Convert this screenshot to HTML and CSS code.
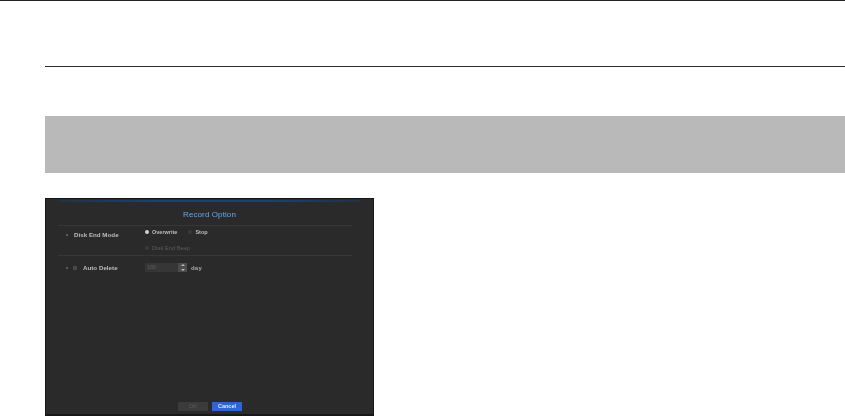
FILE: index.html
```html
<!DOCTYPE html>
<html lang="en">
<head>
<meta charset="utf-8">
<title>Record Option</title>
<link rel="stylesheet" href="styles.css">
</head>
<body>
<div class="top-rule"></div>
<main class="content">
  <div class="section-rule"></div>
  <div class="band"></div>
  <section class="dialog">
    <div class="accent"></div>
    <h1 class="title">Record Option</h1>
    <div class="form">
      <div class="row row-mode">
        <div class="label"><span class="bullet"></span>Disk End Mode</div>
        <div class="options">
          <div class="radios">
            <span class="radio radio-on"></span><span class="opt opt-over">Overwrite</span>
            <span class="radio"></span><span class="opt">Stop</span>
          </div>
          <div class="beep"><span class="check-off"></span><span class="opt-dim">Disk End Beep</span></div>
        </div>
      </div>
      <div class="row row-delete">
        <div class="label label-check"><span class="bullet"></span><span class="check"></span>Auto Delete</div>
        <div class="days">
          <div class="spin-input">180</div>
          <div class="spin-btn"><span class="up"></span><span class="down"></span></div>
          <span class="unit">day</span>
        </div>
      </div>
    </div>
    <div class="actions">
      <button class="btn btn-ok" type="button">OK</button>
      <button class="btn btn-cancel" type="button">Cancel</button>
    </div>
  </section>
</main>
</body>
</html>
```
FILE: styles.css
```css
* { box-sizing: border-box; }
html, body { margin: 0; padding: 0; height: 417px; overflow: hidden; background: #fff; }
body { font-family: "Liberation Sans", Arial, sans-serif; }
.top-rule { height: 1px; background: #222; }
.content { padding: 65px 0 0 45px; }
.section-rule { height: 1px; background: #2a2a2a; }
.band { height: 57px; margin-top: 49px; background: #b9b9b9; }
.dialog {
  width: 329px; height: 218px; margin-top: 25px;
  display: flex; flex-direction: column;
  background: #2a2a2a; border: 1px solid #161616; border-bottom-width: 2px;
}
.accent { height: 2px; margin: 1px 12px 0; background: linear-gradient(90deg, #24303f, #1d3f73 30%, #1d3f73 70%, #24303f); }
.title {
  margin: 7px 0 0; height: 12px;
  font-size: 8px; line-height: 12px; font-weight: 400; letter-spacing: .1px;
  text-align: center; color: #66a6f0; filter: blur(.4px);
}
.form { margin: 4px 21px 0 12px; flex: 1; }
.row { display: flex; border-top: 1px solid #373737; filter: blur(.4px); }
.row-mode { height: 30px; }
.row-delete { height: 30px; }
.label { width: 87px; display: flex; align-items: center; height: 17px; font-size: 6.2px; letter-spacing: .02px; font-weight: 700; color: #bcbcbc; }
.row-delete .label { height: 23px; }
.bullet { width: 2px; height: 2px; margin: 0 6px 0 8px; background: #5a5a5a; }
.label-check .bullet { margin-right: 5px; }
.check { width: 4px; height: 4px; margin-right: 6px; background: #484848; }
.options { display: flex; flex-direction: column; }
.radios { height: 12px; display: flex; align-items: center; font-size: 5.5px; font-weight: 700; color: #bdbdbd; letter-spacing: 0; }
.radio { width: 4px; height: 4px; margin-right: 3px; border-radius: 50%; background: #3c3c3c; }
.radio-on { background: #d0d0d0; }
.opt-over { margin-right: 11px; }
.beep { height: 15px; margin-top: 2px; display: flex; align-items: center; font-size: 5.5px; letter-spacing: .15px; color: #5e5e5e; }
.check-off { width: 4px; height: 4px; margin-right: 3px; border-radius: 50%; background: #3c3c3c; }
.days { display: flex; align-items: center; height: 23px; }
.spin-input { width: 33px; height: 9px; padding-left: 2px; font-size: 5.5px; line-height: 9px; color: #5e5e5e; background: #363636; }
.spin-btn { width: 9px; height: 9px; display: flex; flex-direction: column; align-items: center; justify-content: space-between; padding: 1px 0; background: #4c4c4c; }
.up { border: 2px solid transparent; border-top: 0; border-bottom: 2px solid #bbb; }
.down { border: 2px solid transparent; border-bottom: 0; border-top: 2px solid #bbb; }
.unit { margin-left: 4px; font-size: 6px; letter-spacing: .2px; font-weight: 700; color: #a8a8a8; }
.actions { display: flex; justify-content: center; gap: 4px; height: 12px; padding-left: 1px; filter: blur(.3px); }
.btn { width: 30px; height: 9px; padding: 0; border: 0; font: 5.5px/9px "Liberation Sans", Arial, sans-serif; }
.btn-ok { background: #3b3b3b; color: #5c5c5c; }
.btn-cancel { background: #2f63d6; color: #e4e8f4; font-weight: 700; }
```
